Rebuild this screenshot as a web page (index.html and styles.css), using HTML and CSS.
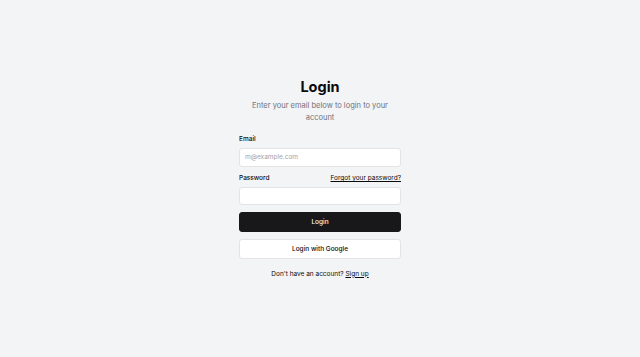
FILE: index.html
```html
<!DOCTYPE html>
<html lang="en">
<head>
<meta charset="utf-8">
<title>Login</title>
<link rel="stylesheet" href="styles.css">
</head>
<body>
<main class="page">
  <form class="login">
    <div class="header">
      <h1 class="title">Login</h1>
      <p class="subtitle">Enter your email below to login to your account</p>
    </div>
    <div class="field field-email">
      <label class="label" for="email">Email</label>
      <input class="input" id="email" type="email" placeholder="m@example.com">
    </div>
    <div class="field field-password">
      <div class="label-row">
        <label class="label" for="password">Password</label>
        <a class="link" href="#">Forgot your password?</a>
      </div>
      <input class="input" id="password" type="password">
    </div>
    <div class="actions">
      <button class="btn btn-primary" type="button">Login</button>
      <button class="btn btn-outline" type="button">Login with Google</button>
    </div>
    <p class="footer">Don't have an account? <a class="link" href="#">Sign up</a></p>
  </form>
</main>
</body>
</html>
```
FILE: styles.css
```css
* { box-sizing: border-box; }
html, body { margin: 0; padding: 0; }
body {
  background: #f3f4f6;
  font-family: Inter, "Noto Sans", sans-serif;
  color: #0a0a0a;
}
.page {
  height: 357px;
  display: flex;
  align-items: center;
  justify-content: center;
}
.login {
  width: 162px;
  display: flex;
  flex-direction: column;
}
.header {
  display: flex;
  flex-direction: column;
  align-items: center;
  gap: 4px;
  text-align: center;
}
.title {
  margin: 0;
  font-size: 14.5px;
  line-height: 18px;
  font-weight: 700;
}
.subtitle {
  margin: 0;
  font-size: 7.5px;
  line-height: 12px;
  color: #71717a;
}
.field {
  display: flex;
  flex-direction: column;
  gap: 4.7px;
}
.field-email { margin-top: 11px; }
.field-password { margin-top: 7.5px; }
.label-row {
  display: flex;
  justify-content: space-between;
  align-items: center;
  font-size: 6.5px;
  line-height: 8px;
}
.label {
  font-size: 6.5px;
  line-height: 8px;
  font-weight: 500;
}
.input {
  height: 18.6px;
  border: 1px solid #e4e4e7;
  border-radius: 3px;
  background: #fff;
  padding: 0 5px;
  font-family: inherit;
  font-size: 6.5px;
  color: #0a0a0a;
  outline: none;
}
.input::placeholder { color: #a1a1aa; }
.link {
  color: inherit;
  text-decoration: underline;
  text-underline-offset: 1px;
}
.actions {
  display: flex;
  flex-direction: column;
  gap: 7px;
  margin-top: 7px;
}
.btn {
  height: 19.6px;
  border-radius: 3px;
  font-family: inherit;
  font-size: 6.5px;
  font-weight: 500;
  cursor: pointer;
}
.btn-primary {
  background: #18181b;
  color: #fafafa;
  border: 1px solid #18181b;
}
.btn-outline {
  background: #fff;
  color: #0a0a0a;
  border: 1px solid #e4e4e7;
}
.footer {
  margin: 10px 0 0;
  text-align: center;
  font-size: 6.5px;
  line-height: 10px;
}
```
